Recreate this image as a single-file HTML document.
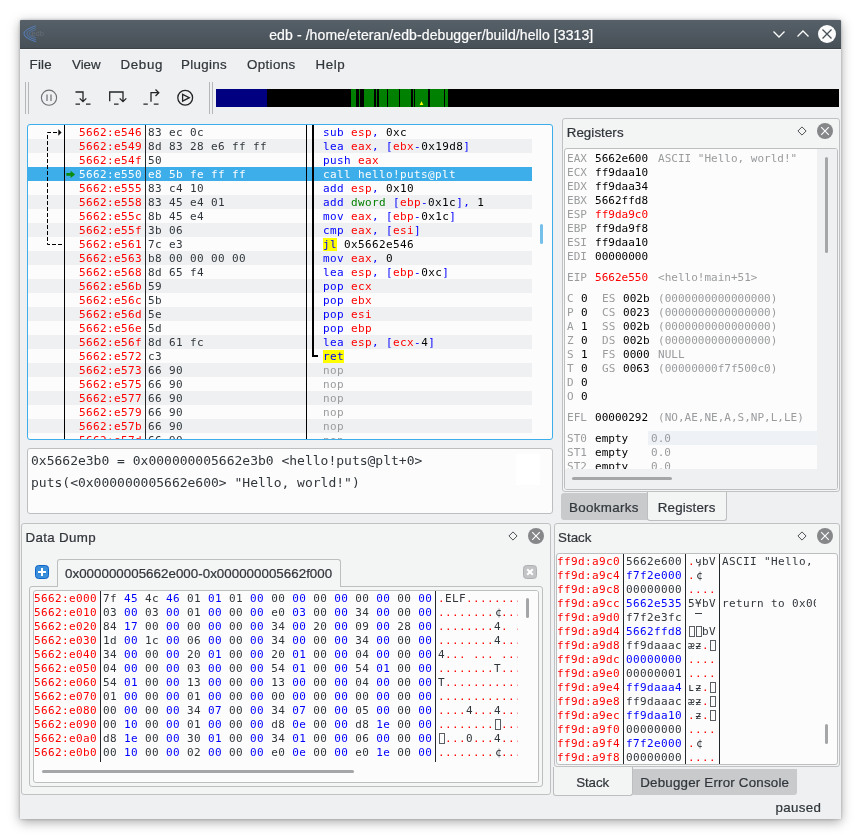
<!DOCTYPE html>
<html lang="en"><head><meta charset="utf-8"><title>edb - /home/eteran/edb-debugger/build/hello [3313]</title>
<style>
html,body{margin:0;padding:0}
body{width:861px;height:839px;background:#fff;position:relative;overflow:hidden;font-family:"Liberation Sans","DejaVu Sans",sans-serif;font-size:13.33px;color:#31363b}
*{box-sizing:border-box}
.abs{position:absolute}
.mono{font-family:"DejaVu Sans Mono","Liberation Mono",monospace;font-size:11px;letter-spacing:.3775px;white-space:pre;line-height:14px;color:#31363b}
.row{position:absolute;left:0;right:0;height:14px;line-height:14px;white-space:pre}
.r{color:#ff0000}.b{color:#0000ff}.g{color:#008000}.k{color:#000}.n{color:#999b9d}.d{color:#31363b}
.hl{background:#ffff00}
.c{color:#2a2e32;position:relative;left:1px}
.ui{position:absolute;white-space:nowrap;line-height:16px;-webkit-text-stroke-width:.22px}
.frame{position:absolute;border:1px solid #bcbec0;border-radius:3px;background:#fcfcfc}
.dock{position:absolute;border:1px solid #bfc1c3;border-radius:3px;background:#f3f4f4}
.vline{position:absolute;width:1px;background:#000}
.mc{display:inline-block;width:7px;height:1px;background:#3a3f44;vertical-align:7px}
.bx{display:inline-block;width:6px;height:11px;border:1px solid #5a5e62;margin:0 .5px;vertical-align:-2px;box-sizing:border-box}
</style></head>
<body>
<div id="root" style="position:absolute;left:0;top:0;width:861px;height:839px;will-change:transform">
<div class="abs" id="win" style="left:20px;top:20px;width:821px;height:799px;background:#eff0f1;box-shadow:0 3px 12px rgba(0,0,0,.35),0 0 3px rgba(0,0,0,.25);border-radius:1px 1px 0 0"></div>
<div class="abs" id="titlebar" style="left:20px;top:20px;width:821px;height:29px;background:linear-gradient(#566068,#475057);border-bottom:1px solid #3c444a;border-radius:1px 1px 0 0"></div><div class="abs" style="left:20px;top:49px;width:821px;height:1px;background:#f8f8f9"></div>
<div class="ui" id="title" style="left:20.8px;width:821px;top:26px;text-align:center;color:#fcfcfc;font-size:14px;line-height:18px;letter-spacing:.1px">edb - /home/eteran/edb-debugger/build/hello [3313]</div>
<svg class="abs" style="left:22px;top:24px" width="26" height="20" viewBox="0 0 26 20"><g fill="none" stroke="#5682c4" stroke-width="1.2" stroke-linecap="round"><path d="M13.5 1.8 Q-9.5 9.7 13.5 17.6" opacity=".75"/><path d="M13.5 3.8 Q-3.5 9.7 13.5 15.6" opacity=".6"/><path d="M13.5 5.8 Q1.5 9.7 13.5 13.6" opacity=".45"/></g><text x="9.4" y="12.2" font-family="Liberation Sans,sans-serif" font-size="7.5" fill="#656e76">edb</text></svg>
<svg class="abs" style="left:765px;top:22px" width="76" height="24" viewBox="0 0 76 24"><g fill="none" stroke="#fcfcfc" stroke-width="1.3"><path d="M8.5 9.5 L14 15 L19.5 9.5"/><path d="M32.5 14.5 L38 9 L43.5 14.5"/></g><circle cx="62" cy="12" r="9" fill="#fcfcfc"/><path d="M57.5 7.5 L66.5 16.5 M66.5 7.5 L57.5 16.5" stroke="#475057" stroke-width="1.3" fill="none"/></svg>
<div class="ui" style="left:29.5px;top:57px;letter-spacing:0.25px">File</div><div class="ui" style="left:72px;top:57px">View</div><div class="ui" style="left:120.5px;top:57px;letter-spacing:0.65px">Debug</div><div class="ui" style="left:181px;top:57px;letter-spacing:0.33px">Plugins</div><div class="ui" style="left:247px;top:57px;letter-spacing:0.37px">Options</div><div class="ui" style="left:315.5px;top:57px;letter-spacing:0.55px">Help</div>
<div class="abs" style="left:25px;top:82px;width:1px;height:32px;background:#b4b6b8"></div><div class="abs" style="left:28px;top:82px;width:1px;height:32px;background:#b4b6b8"></div><div class="abs" style="left:209px;top:82px;width:1px;height:32px;background:#b4b6b8"></div><div class="abs" style="left:212px;top:82px;width:1px;height:32px;background:#b4b6b8"></div>
<svg class="abs" style="left:36px;top:82px" width="164" height="32" viewBox="36 82 164 32" fill="none">
<circle cx="49" cy="97.7" r="7.6" stroke="#6c6f73" stroke-width="1.1"/>
<path d="M47 94.5V101M51 94.5V101" stroke="#6c6f73" stroke-width="1.2"/>
<g stroke="#232629" stroke-width="1.3">
<path d="M75.5 92H83V101.5M79.7 98.4L83 101.7L86.3 98.4M75.5 104.2H80M86 104.2H90.5"/>
<path d="M109.7 101.2V92H123V101.5M119.7 98.4L123 101.7L126.3 98.4M114 104.2H118.6"/>
<path d="M151 101.7V92.7H158.5M155.5 89.5L158.8 92.7L155.5 96M143.4 104.2H147.8M153.8 104.2H158.5"/>
<circle cx="185.2" cy="97.7" r="7.4"/>
<path d="M182.6 94.3V101.1L189.3 97.7Z" stroke-linejoin="miter"/>
</g></svg>
<div class="abs" id="regionbar" style="left:216px;top:89px;width:623px;height:18px;background:#000"></div>
<div class="abs" style="left:216px;top:89px;width:51px;height:18px;background:#000080"></div>
<div class="abs" style="left:351px;top:89px;width:5px;height:18px;background:#008000"></div><div class="abs" style="left:359px;top:89px;width:1px;height:18px;background:#008000"></div><div class="abs" style="left:364px;top:89px;width:10px;height:18px;background:#008000"></div><div class="abs" style="left:376px;top:89px;width:1px;height:18px;background:#008000"></div><div class="abs" style="left:379px;top:89px;width:8px;height:18px;background:#008000"></div><div class="abs" style="left:388px;top:89px;width:11px;height:18px;background:#008000"></div><div class="abs" style="left:400px;top:89px;width:11px;height:18px;background:#008000"></div><div class="abs" style="left:413px;top:89px;width:1px;height:18px;background:#008000"></div><div class="abs" style="left:415px;top:89px;width:13px;height:18px;background:#008000"></div><div class="abs" style="left:430px;top:89px;width:14px;height:18px;background:#008000"></div><div class="abs" style="left:445px;top:89px;width:3px;height:18px;background:#008000"></div>
<svg class="abs" style="left:419px;top:100px" width="6" height="6" viewBox="0 0 6 6"><path d="M0.6 5 L2.5 1.2 L4.4 5Z" fill="#ffff00"/></svg>
<div class="abs" id="disasm" style="left:27px;top:124px;width:526px;height:316px;border:1px solid #3daee9;border-radius:3px;background:#fcfcfc;overflow:hidden">
<div class="abs mono" style="left:51px;top:1px;color:#ff0000">5662:e546</div><div class="abs mono" style="left:120px;top:1px;color:#31363b">83 ec 0c</div><div class="abs mono" style="left:295px;top:1px;"><span class="b">sub</span> <span class="r">esp</span><span class="b">,</span> <span class="k">0xc</span></div>
<div class="abs" style="left:0;top:14px;width:504px;height:14px;background:#eff0f1"></div><div class="abs mono" style="left:51px;top:15px;color:#ff0000">5662:e549</div><div class="abs mono" style="left:120px;top:15px;color:#31363b">8d 83 28 e6 ff ff</div><div class="abs mono" style="left:295px;top:15px;"><span class="b">lea</span> <span class="r">eax</span><span class="b">,</span> <span class="b">[</span><span class="r">ebx</span><span class="b">-</span><span class="k">0x19d8</span><span class="b">]</span></div>
<div class="abs mono" style="left:51px;top:29px;color:#ff0000">5662:e54f</div><div class="abs mono" style="left:120px;top:29px;color:#31363b">50</div><div class="abs mono" style="left:295px;top:29px;"><span class="b">push</span> <span class="r">eax</span></div>
<div class="abs" style="left:0;top:42px;width:504px;height:14px;background:#3daee9"></div><div class="abs mono" style="left:51px;top:43px;color:#fcfcfc">5662:e550</div><div class="abs mono" style="left:120px;top:43px;color:#fcfcfc">e8 5b fe ff ff</div><div class="abs mono" style="left:295px;top:43px;color:#fcfcfc">call hello!puts@plt</div>
<div class="abs mono" style="left:51px;top:57px;color:#ff0000">5662:e555</div><div class="abs mono" style="left:120px;top:57px;color:#31363b">83 c4 10</div><div class="abs mono" style="left:295px;top:57px;"><span class="b">add</span> <span class="r">esp</span><span class="b">,</span> <span class="k">0x10</span></div>
<div class="abs" style="left:0;top:70px;width:504px;height:14px;background:#eff0f1"></div><div class="abs mono" style="left:51px;top:71px;color:#ff0000">5662:e558</div><div class="abs mono" style="left:120px;top:71px;color:#31363b">83 45 e4 01</div><div class="abs mono" style="left:295px;top:71px;"><span class="b">add</span> <span class="g">dword</span> <span class="b">[</span><span class="r">ebp</span><span class="b">-</span><span class="k">0x1c</span><span class="b">],</span> <span class="k">1</span></div>
<div class="abs mono" style="left:51px;top:85px;color:#ff0000">5662:e55c</div><div class="abs mono" style="left:120px;top:85px;color:#31363b">8b 45 e4</div><div class="abs mono" style="left:295px;top:85px;"><span class="b">mov</span> <span class="r">eax</span><span class="b">,</span> <span class="b">[</span><span class="r">ebp</span><span class="b">-</span><span class="k">0x1c</span><span class="b">]</span></div>
<div class="abs" style="left:0;top:98px;width:504px;height:14px;background:#eff0f1"></div><div class="abs mono" style="left:51px;top:99px;color:#ff0000">5662:e55f</div><div class="abs mono" style="left:120px;top:99px;color:#31363b">3b 06</div><div class="abs mono" style="left:295px;top:99px;"><span class="b">cmp</span> <span class="r">eax</span><span class="b">,</span> <span class="b">[</span><span class="r">esi</span><span class="b">]</span></div>
<div class="abs mono" style="left:51px;top:113px;color:#ff0000">5662:e561</div><div class="abs mono" style="left:120px;top:113px;color:#31363b">7c e3</div><div class="abs mono" style="left:295px;top:113px;"><span class="b hl">jl</span> <span class="k">0x5662e546</span></div>
<div class="abs" style="left:0;top:126px;width:504px;height:14px;background:#eff0f1"></div><div class="abs mono" style="left:51px;top:127px;color:#ff0000">5662:e563</div><div class="abs mono" style="left:120px;top:127px;color:#31363b">b8 00 00 00 00</div><div class="abs mono" style="left:295px;top:127px;"><span class="b">mov</span> <span class="r">eax</span><span class="b">,</span> <span class="k">0</span></div>
<div class="abs mono" style="left:51px;top:141px;color:#ff0000">5662:e568</div><div class="abs mono" style="left:120px;top:141px;color:#31363b">8d 65 f4</div><div class="abs mono" style="left:295px;top:141px;"><span class="b">lea</span> <span class="r">esp</span><span class="b">,</span> <span class="b">[</span><span class="r">ebp</span><span class="b">-</span><span class="k">0xc</span><span class="b">]</span></div>
<div class="abs" style="left:0;top:154px;width:504px;height:14px;background:#eff0f1"></div><div class="abs mono" style="left:51px;top:155px;color:#ff0000">5662:e56b</div><div class="abs mono" style="left:120px;top:155px;color:#31363b">59</div><div class="abs mono" style="left:295px;top:155px;"><span class="b">pop</span> <span class="r">ecx</span></div>
<div class="abs mono" style="left:51px;top:169px;color:#ff0000">5662:e56c</div><div class="abs mono" style="left:120px;top:169px;color:#31363b">5b</div><div class="abs mono" style="left:295px;top:169px;"><span class="b">pop</span> <span class="r">ebx</span></div>
<div class="abs" style="left:0;top:182px;width:504px;height:14px;background:#eff0f1"></div><div class="abs mono" style="left:51px;top:183px;color:#ff0000">5662:e56d</div><div class="abs mono" style="left:120px;top:183px;color:#31363b">5e</div><div class="abs mono" style="left:295px;top:183px;"><span class="b">pop</span> <span class="r">esi</span></div>
<div class="abs mono" style="left:51px;top:197px;color:#ff0000">5662:e56e</div><div class="abs mono" style="left:120px;top:197px;color:#31363b">5d</div><div class="abs mono" style="left:295px;top:197px;"><span class="b">pop</span> <span class="r">ebp</span></div>
<div class="abs" style="left:0;top:210px;width:504px;height:14px;background:#eff0f1"></div><div class="abs mono" style="left:51px;top:211px;color:#ff0000">5662:e56f</div><div class="abs mono" style="left:120px;top:211px;color:#31363b">8d 61 fc</div><div class="abs mono" style="left:295px;top:211px;"><span class="b">lea</span> <span class="r">esp</span><span class="b">,</span> <span class="b">[</span><span class="r">ecx</span><span class="b">-</span><span class="k">4</span><span class="b">]</span></div>
<div class="abs mono" style="left:51px;top:225px;color:#ff0000">5662:e572</div><div class="abs mono" style="left:120px;top:225px;color:#31363b">c3</div><div class="abs mono" style="left:295px;top:225px;"><span class="b hl">ret</span></div>
<div class="abs" style="left:0;top:238px;width:504px;height:14px;background:#eff0f1"></div><div class="abs mono" style="left:51px;top:239px;color:#ff0000">5662:e573</div><div class="abs mono" style="left:120px;top:239px;color:#31363b">66 90</div><div class="abs mono" style="left:295px;top:239px;"><span class="n">nop</span></div>
<div class="abs mono" style="left:51px;top:253px;color:#ff0000">5662:e575</div><div class="abs mono" style="left:120px;top:253px;color:#31363b">66 90</div><div class="abs mono" style="left:295px;top:253px;"><span class="n">nop</span></div>
<div class="abs" style="left:0;top:266px;width:504px;height:14px;background:#eff0f1"></div><div class="abs mono" style="left:51px;top:267px;color:#ff0000">5662:e577</div><div class="abs mono" style="left:120px;top:267px;color:#31363b">66 90</div><div class="abs mono" style="left:295px;top:267px;"><span class="n">nop</span></div>
<div class="abs mono" style="left:51px;top:281px;color:#ff0000">5662:e579</div><div class="abs mono" style="left:120px;top:281px;color:#31363b">66 90</div><div class="abs mono" style="left:295px;top:281px;"><span class="n">nop</span></div>
<div class="abs" style="left:0;top:294px;width:504px;height:14px;background:#eff0f1"></div><div class="abs mono" style="left:51px;top:295px;color:#ff0000">5662:e57b</div><div class="abs mono" style="left:120px;top:295px;color:#31363b">66 90</div><div class="abs mono" style="left:295px;top:295px;"><span class="n">nop</span></div>
<div class="abs mono" style="left:51px;top:309px;color:#ff0000">5662:e57d</div><div class="abs mono" style="left:120px;top:309px;color:#31363b">66 90</div><div class="abs mono" style="left:295px;top:309px;"><span class="n">nop</span></div>
<div class="vline" style="left:36px;top:0;height:315px"></div><div class="vline" style="left:117px;top:0;height:315px;background:#232629"></div><div class="vline" style="left:278px;top:0;height:315px"></div><div class="abs" style="left:284px;top:0;width:2px;height:232px;background:#000"></div><div class="abs" style="left:284px;top:230px;width:6px;height:2px;background:#000"></div>
<svg class="abs" style="left:0;top:0" width="36" height="130" viewBox="0 0 36 130" fill="none"><path d="M34 119.5H19.5V7.5H30" stroke="#000" stroke-width="1" stroke-dasharray="4 2"/><path d="M30.3 4.3L33.6 7.5L30.3 10.7Z" fill="#111"/></svg>
<svg class="abs" style="left:38px;top:44px" width="11" height="10" viewBox="0 0 11 10"><path d="M0.3 4H4.6V1.8L9.1 5.4L4.6 9V6.8H0.3Z" fill="#0c8c0c"/></svg>
<div class="abs" style="left:512px;top:99px;width:3px;height:20px;background:#74c0ea;border-radius:2px"></div>
</div>
<div class="frame" id="info" style="left:27px;top:448px;width:526px;height:66px;background:#fcfcfc"></div>
<div class="abs mono" style="left:31px;top:454px;font-size:13px;letter-spacing:0;line-height:14px">0x5662e3b0 = 0x000000005662e3b0 &lt;hello!puts@plt+0&gt;</div>
<div class="abs mono" style="left:31px;top:476px;font-size:13px;letter-spacing:0;line-height:14px">puts(&lt;0x000000005662e600&gt; "Hello, world!")</div>
<div class="abs" style="left:516px;top:454px;width:24px;height:31px;background:#fff"></div>
<div class="dock" id="regdock" style="left:562px;top:118px;width:278px;height:374px"></div>
<div class="ui" style="left:566.7px;top:125px;letter-spacing:0.07px">Registers</div>
<svg class="abs" style="left:796px;top:125px" width="12" height="12" viewBox="0 0 12 12"><path d="M6 1.9L10.1 6L6 10.1L1.9 6Z" fill="none" stroke="#4d5155" stroke-width="1"/></svg><svg class="abs" style="left:816px;top:122px" width="18" height="18" viewBox="0 0 18 18"><circle cx="9" cy="9" r="8" fill="#858789"/><path d="M5.2 5.2L12.8 12.8M12.8 5.2L5.2 12.8" stroke="#fcfcfc" stroke-width="1.2"/></svg>
<div class="frame" id="regview" style="left:564px;top:148px;width:274px;height:342px;overflow:hidden">
<div class="abs" style="left:252px;top:0;width:20px;height:340px;background:#eff0f1"></div><div class="abs" style="left:0;top:320px;width:272px;height:20px;background:#eff0f1"></div><div class="abs" style="left:260px;top:8px;width:3px;height:96px;background:#a4a6a8;border-radius:2px"></div><div class="abs" style="left:7px;top:328px;width:100px;height:3px;background:#a4a6a8;border-radius:2px"></div><div class="abs" style="left:83px;top:282px;width:169px;height:14px;background:#eef2f7"></div>
<div class="abs" style="left:0;top:0;width:252px;height:320px;overflow:hidden">
<div class="abs mono n" style="left:2.1px;top:3px;letter-spacing:0">EAX</div><div class="abs mono k" style="left:30.1px;top:3px;letter-spacing:0">5662e600</div><div class="abs mono n" style="left:93.1px;top:3px;letter-spacing:0">ASCII &quot;Hello, world!&quot;</div>
<div class="abs mono n" style="left:2.1px;top:17px;letter-spacing:0">ECX</div><div class="abs mono k" style="left:30.1px;top:17px;letter-spacing:0">ff9daa10</div>
<div class="abs mono n" style="left:2.1px;top:31px;letter-spacing:0">EDX</div><div class="abs mono k" style="left:30.1px;top:31px;letter-spacing:0">ff9daa34</div>
<div class="abs mono n" style="left:2.1px;top:45px;letter-spacing:0">EBX</div><div class="abs mono k" style="left:30.1px;top:45px;letter-spacing:0">5662ffd8</div>
<div class="abs mono n" style="left:2.1px;top:59px;letter-spacing:0">ESP</div><div class="abs mono r" style="left:30.1px;top:59px;letter-spacing:0">ff9da9c0</div>
<div class="abs mono n" style="left:2.1px;top:73px;letter-spacing:0">EBP</div><div class="abs mono k" style="left:30.1px;top:73px;letter-spacing:0">ff9da9f8</div>
<div class="abs mono n" style="left:2.1px;top:87px;letter-spacing:0">ESI</div><div class="abs mono k" style="left:30.1px;top:87px;letter-spacing:0">ff9daa10</div>
<div class="abs mono n" style="left:2.1px;top:101px;letter-spacing:0">EDI</div><div class="abs mono k" style="left:30.1px;top:101px;letter-spacing:0">00000000</div>
<div class="abs mono n" style="left:2.1px;top:122px;letter-spacing:0">EIP</div><div class="abs mono r" style="left:30.1px;top:122px;letter-spacing:0">5662e550</div><div class="abs mono n" style="left:93.1px;top:122px;letter-spacing:0">&lt;hello!main+51&gt;</div>
<div class="abs mono n" style="left:2.1px;top:143px;letter-spacing:0">C</div><div class="abs mono k" style="left:16.1px;top:143px;letter-spacing:0">0</div><div class="abs mono n" style="left:37.1px;top:143px;letter-spacing:0">ES</div><div class="abs mono k" style="left:58.1px;top:143px;letter-spacing:0">002b</div><div class="abs mono n" style="left:93.1px;top:143px;letter-spacing:0">(0000000000000000)</div>
<div class="abs mono n" style="left:2.1px;top:157px;letter-spacing:0">P</div><div class="abs mono k" style="left:16.1px;top:157px;letter-spacing:0">0</div><div class="abs mono n" style="left:37.1px;top:157px;letter-spacing:0">CS</div><div class="abs mono k" style="left:58.1px;top:157px;letter-spacing:0">0023</div><div class="abs mono n" style="left:93.1px;top:157px;letter-spacing:0">(0000000000000000)</div>
<div class="abs mono n" style="left:2.1px;top:171px;letter-spacing:0">A</div><div class="abs mono k" style="left:16.1px;top:171px;letter-spacing:0">1</div><div class="abs mono n" style="left:37.1px;top:171px;letter-spacing:0">SS</div><div class="abs mono k" style="left:58.1px;top:171px;letter-spacing:0">002b</div><div class="abs mono n" style="left:93.1px;top:171px;letter-spacing:0">(0000000000000000)</div>
<div class="abs mono n" style="left:2.1px;top:185px;letter-spacing:0">Z</div><div class="abs mono k" style="left:16.1px;top:185px;letter-spacing:0">0</div><div class="abs mono n" style="left:37.1px;top:185px;letter-spacing:0">DS</div><div class="abs mono k" style="left:58.1px;top:185px;letter-spacing:0">002b</div><div class="abs mono n" style="left:93.1px;top:185px;letter-spacing:0">(0000000000000000)</div>
<div class="abs mono n" style="left:2.1px;top:199px;letter-spacing:0">S</div><div class="abs mono k" style="left:16.1px;top:199px;letter-spacing:0">1</div><div class="abs mono n" style="left:37.1px;top:199px;letter-spacing:0">FS</div><div class="abs mono k" style="left:58.1px;top:199px;letter-spacing:0">0000</div><div class="abs mono n" style="left:93.1px;top:199px;letter-spacing:0">NULL</div>
<div class="abs mono n" style="left:2.1px;top:213px;letter-spacing:0">T</div><div class="abs mono k" style="left:16.1px;top:213px;letter-spacing:0">0</div><div class="abs mono n" style="left:37.1px;top:213px;letter-spacing:0">GS</div><div class="abs mono k" style="left:58.1px;top:213px;letter-spacing:0">0063</div><div class="abs mono n" style="left:93.1px;top:213px;letter-spacing:0">(00000000f7f500c0)</div>
<div class="abs mono n" style="left:2.1px;top:227px;letter-spacing:0">D</div><div class="abs mono k" style="left:16.1px;top:227px;letter-spacing:0">0</div>
<div class="abs mono n" style="left:2.1px;top:241px;letter-spacing:0">O</div><div class="abs mono k" style="left:16.1px;top:241px;letter-spacing:0">0</div>
<div class="abs mono n" style="left:2.1px;top:262px;letter-spacing:0">EFL</div><div class="abs mono k" style="left:30.1px;top:262px;letter-spacing:0">00000292</div><div class="abs mono n" style="left:93.1px;top:262px;letter-spacing:0">(NO,AE,NE,A,S,NP,L,LE)</div>
<div class="abs mono n" style="left:2.1px;top:283px;letter-spacing:0">ST0</div><div class="abs mono k" style="left:30.1px;top:283px;letter-spacing:0">empty</div><div class="abs mono n" style="left:86.1px;top:283px;letter-spacing:0">0.0</div>
<div class="abs mono n" style="left:2.1px;top:297px;letter-spacing:0">ST1</div><div class="abs mono k" style="left:30.1px;top:297px;letter-spacing:0">empty</div><div class="abs mono n" style="left:86.1px;top:297px;letter-spacing:0">0.0</div>
<div class="abs mono n" style="left:2.1px;top:311px;letter-spacing:0">ST2</div><div class="abs mono k" style="left:30.1px;top:311px;letter-spacing:0">empty</div><div class="abs mono n" style="left:86.1px;top:311px;letter-spacing:0">0.0</div>
</div></div>
<div class="abs" style="left:561px;top:493px;width:87px;height:27px;background:#c8cacc;border-radius:3px 0 0 3px"></div><div class="abs" style="left:647px;top:492px;width:80px;height:29px;background:#f3f4f4;border:1px solid #bcbec0;border-top:none;border-radius:0 0 3px 3px"></div><div class="ui" style="left:569px;top:500px;letter-spacing:0.35px">Bookmarks</div><div class="ui" style="left:657.8px;top:500px;letter-spacing:0.15px">Registers</div>
<div class="dock" id="dumpdock" style="left:21px;top:523px;width:530px;height:272px"></div>
<div class="ui" style="left:25.5px;top:530px;letter-spacing:0.33px">Data Dump</div>
<svg class="abs" style="left:507px;top:530px" width="12" height="12" viewBox="0 0 12 12"><path d="M6 1.9L10.1 6L6 10.1L1.9 6Z" fill="none" stroke="#4d5155" stroke-width="1"/></svg><svg class="abs" style="left:527px;top:527px" width="18" height="18" viewBox="0 0 18 18"><circle cx="9" cy="9" r="8" fill="#858789"/><path d="M5.2 5.2L12.8 12.8M12.8 5.2L5.2 12.8" stroke="#fcfcfc" stroke-width="1.2"/></svg>
<div class="abs" style="left:29px;top:586px;width:514px;height:201px;border:1px solid #bcbec0;border-radius:3px;background:#f4f5f5"></div>
<div class="abs" style="left:57px;top:559px;width:284px;height:28px;border:1px solid #bcbec0;border-bottom:none;border-radius:3px 3px 0 0;background:#f4f5f5"></div>
<div class="ui" style="left:65px;top:566px;letter-spacing:0.03px">0x000000005662e000-0x000000005662f000</div>
<svg class="abs" style="left:35px;top:565px" width="14" height="14" viewBox="0 0 14 14"><rect x=".5" y=".5" width="13" height="13" rx="3" fill="#3b8eda" stroke="#0c63c9"/><path d="M7 4.3V11M3.3 7.6H10.7" stroke="#0a4fb4" stroke-width="2" opacity=".55"/><path d="M7 3V11M3 7H11" stroke="#fff" stroke-width="2"/></svg>
<svg class="abs" style="left:523px;top:565px" width="14" height="14" viewBox="0 0 14 14"><rect x=".5" y=".5" width="13" height="13" rx="3" fill="#c3c4c6" stroke="#aeb0b2"/><path d="M4.2 4.2L9.8 9.8M9.8 4.2L4.2 9.8" stroke="#fff" stroke-width="2"/></svg>
<div class="frame" id="hexview" style="left:33px;top:590px;width:506px;height:193px;overflow:hidden">
<div class="abs" style="left:485px;top:0;width:19px;height:191px;background:#fcfcfc"></div><div class="abs mono r" style="left:0px;top:1px">5662:e000</div><div class="abs mono" style="left:69px;top:1px">7f <span class="b">45</span> 4c <span class="b">46</span> 01 <span class="b">01</span> 01 <span class="b">00</span> 00 <span class="b">00</span> 00 <span class="b">00</span> 00 <span class="b">00</span> 00 <span class="b">00</span></div><div class="abs mono" style="left:404px;top:1px;width:80px;overflow:hidden"><span class="r">.</span><span class="d">ELF</span><span class="r">............</span></div>
<div class="abs mono r" style="left:0px;top:15px">5662:e010</div><div class="abs mono" style="left:69px;top:15px">03 <span class="b">00</span> 03 <span class="b">00</span> 01 <span class="b">00</span> 00 <span class="b">00</span> e0 <span class="b">03</span> 00 <span class="b">00</span> 34 <span class="b">00</span> 00 <span class="b">00</span></div><div class="abs mono" style="left:404px;top:15px;width:80px;overflow:hidden"><span class="r">........</span><span class="c">¢</span><span class="r">...</span><span class="d">4</span><span class="r">...</span></div>
<div class="abs mono r" style="left:0px;top:29px">5662:e020</div><div class="abs mono" style="left:69px;top:29px">84 <span class="b">17</span> 00 <span class="b">00</span> 00 <span class="b">00</span> 00 <span class="b">00</span> 34 <span class="b">00</span> 20 <span class="b">00</span> 09 <span class="b">00</span> 28 <span class="b">00</span></div><div class="abs mono" style="left:404px;top:29px;width:80px;overflow:hidden"><span class="r">........</span><span class="d">4</span><span class="r">.</span><span class="d"> </span><span class="r">...</span><span class="d">(</span><span class="r">.</span></div>
<div class="abs mono r" style="left:0px;top:43px">5662:e030</div><div class="abs mono" style="left:69px;top:43px">1d <span class="b">00</span> 1c <span class="b">00</span> 06 <span class="b">00</span> 00 <span class="b">00</span> 34 <span class="b">00</span> 00 <span class="b">00</span> 34 <span class="b">00</span> 00 <span class="b">00</span></div><div class="abs mono" style="left:404px;top:43px;width:80px;overflow:hidden"><span class="r">........</span><span class="d">4</span><span class="r">...</span><span class="d">4</span><span class="r">...</span></div>
<div class="abs mono r" style="left:0px;top:57px">5662:e040</div><div class="abs mono" style="left:69px;top:57px">34 <span class="b">00</span> 00 <span class="b">00</span> 20 <span class="b">01</span> 00 <span class="b">00</span> 20 <span class="b">01</span> 00 <span class="b">00</span> 04 <span class="b">00</span> 00 <span class="b">00</span></div><div class="abs mono" style="left:404px;top:57px;width:80px;overflow:hidden"><span class="d">4</span><span class="r">...</span><span class="d"> </span><span class="r">...</span><span class="d"> </span><span class="r">.......</span></div>
<div class="abs mono r" style="left:0px;top:71px">5662:e050</div><div class="abs mono" style="left:69px;top:71px">04 <span class="b">00</span> 00 <span class="b">00</span> 03 <span class="b">00</span> 00 <span class="b">00</span> 54 <span class="b">01</span> 00 <span class="b">00</span> 54 <span class="b">01</span> 00 <span class="b">00</span></div><div class="abs mono" style="left:404px;top:71px;width:80px;overflow:hidden"><span class="r">........</span><span class="d">T</span><span class="r">...</span><span class="d">T</span><span class="r">...</span></div>
<div class="abs mono r" style="left:0px;top:85px">5662:e060</div><div class="abs mono" style="left:69px;top:85px">54 <span class="b">01</span> 00 <span class="b">00</span> 13 <span class="b">00</span> 00 <span class="b">00</span> 13 <span class="b">00</span> 00 <span class="b">00</span> 04 <span class="b">00</span> 00 <span class="b">00</span></div><div class="abs mono" style="left:404px;top:85px;width:80px;overflow:hidden"><span class="d">T</span><span class="r">...............</span></div>
<div class="abs mono r" style="left:0px;top:99px">5662:e070</div><div class="abs mono" style="left:69px;top:99px">01 <span class="b">00</span> 00 <span class="b">00</span> 01 <span class="b">00</span> 00 <span class="b">00</span> 00 <span class="b">00</span> 00 <span class="b">00</span> 00 <span class="b">00</span> 00 <span class="b">00</span></div><div class="abs mono" style="left:404px;top:99px;width:80px;overflow:hidden"><span class="r">................</span></div>
<div class="abs mono r" style="left:0px;top:113px">5662:e080</div><div class="abs mono" style="left:69px;top:113px">00 <span class="b">00</span> 00 <span class="b">00</span> 34 <span class="b">07</span> 00 <span class="b">00</span> 34 <span class="b">07</span> 00 <span class="b">00</span> 05 <span class="b">00</span> 00 <span class="b">00</span></div><div class="abs mono" style="left:404px;top:113px;width:80px;overflow:hidden"><span class="r">....</span><span class="d">4</span><span class="r">...</span><span class="d">4</span><span class="r">.......</span></div>
<div class="abs mono r" style="left:0px;top:127px">5662:e090</div><div class="abs mono" style="left:69px;top:127px">00 <span class="b">10</span> 00 <span class="b">00</span> 01 <span class="b">00</span> 00 <span class="b">00</span> d8 <span class="b">0e</span> 00 <span class="b">00</span> d8 <span class="b">1e</span> 00 <span class="b">00</span></div><div class="abs mono" style="left:404px;top:127px;width:80px;overflow:hidden"><span class="r">........</span><span class="bx"></span><span class="r">...</span><span class="bx"></span><span class="r">...</span></div>
<div class="abs mono r" style="left:0px;top:141px">5662:e0a0</div><div class="abs mono" style="left:69px;top:141px">d8 <span class="b">1e</span> 00 <span class="b">00</span> 30 <span class="b">01</span> 00 <span class="b">00</span> 34 <span class="b">01</span> 00 <span class="b">00</span> 06 <span class="b">00</span> 00 <span class="b">00</span></div><div class="abs mono" style="left:404px;top:141px;width:80px;overflow:hidden"><span class="bx"></span><span class="r">...</span><span class="d">0</span><span class="r">...</span><span class="d">4</span><span class="r">.......</span></div>
<div class="abs mono r" style="left:0px;top:155px">5662:e0b0</div><div class="abs mono" style="left:69px;top:155px">00 <span class="b">10</span> 00 <span class="b">00</span> 02 <span class="b">00</span> 00 <span class="b">00</span> e0 <span class="b">0e</span> 00 <span class="b">00</span> e0 <span class="b">1e</span> 00 <span class="b">00</span></div><div class="abs mono" style="left:404px;top:155px;width:80px;overflow:hidden"><span class="r">........</span><span class="c">¢</span><span class="r">...</span><span class="c">¢</span><span class="r">...</span></div>
<div class="vline" style="left:66px;top:0;height:171px;background:#232629"></div><div class="vline" style="left:401px;top:0;height:171px;background:#232629"></div><div class="abs" style="left:492px;top:7px;width:3px;height:20px;background:#a4a6a8;border-radius:2px"></div><div class="abs" style="left:8px;top:179px;width:312px;height:3px;background:#a4a6a8;border-radius:2px"></div>
</div>
<div class="dock" id="stackdock" style="left:554px;top:523px;width:286px;height:244px"></div>
<div class="ui" style="left:558.1px;top:530px">Stack</div>
<svg class="abs" style="left:796px;top:530px" width="12" height="12" viewBox="0 0 12 12"><path d="M6 1.9L10.1 6L6 10.1L1.9 6Z" fill="none" stroke="#4d5155" stroke-width="1"/></svg><svg class="abs" style="left:816px;top:527px" width="18" height="18" viewBox="0 0 18 18"><circle cx="9" cy="9" r="8" fill="#858789"/><path d="M5.2 5.2L12.8 12.8M12.8 5.2L5.2 12.8" stroke="#fcfcfc" stroke-width="1.2"/></svg>
<div class="frame" id="stackview" style="left:556px;top:553px;width:282px;height:212px;overflow:hidden">
<div class="abs mono r" style="left:0px;top:0.5px">ff9d:a9c0</div><div class="abs mono d" style="left:69px;top:0.5px">5662e600</div><div class="abs mono" style="left:131px;top:0.5px"><span class="r">.</span><span class="d">ӌbV</span></div><div class="abs mono" style="left:165px;top:0.5px;width:94px;overflow:hidden">ASCII &quot;Hello, </div>
<div class="abs mono r" style="left:0px;top:14.5px">ff9d:a9c4</div><div class="abs mono b" style="left:69px;top:14.5px">f7f2e000</div><div class="abs mono" style="left:131px;top:14.5px"><span class="r">.</span><span class="c">¢</span></div>
<div class="abs mono r" style="left:0px;top:28.5px">ff9d:a9c8</div><div class="abs mono d" style="left:69px;top:28.5px">00000000</div><div class="abs mono" style="left:131px;top:28.5px"><span class="r">....</span></div>
<div class="abs mono r" style="left:0px;top:42.5px">ff9d:a9cc</div><div class="abs mono b" style="left:69px;top:42.5px">5662e535</div><div class="abs mono" style="left:131px;top:42.5px"><span class="d">5¥bV</span></div><div class="abs mono" style="left:165px;top:42.5px;width:94px;overflow:hidden">return to 0x000</div>
<div class="abs mono r" style="left:0px;top:56.5px">ff9d:a9d0</div><div class="abs mono d" style="left:69px;top:56.5px">f7f2e3fc</div><div class="abs mono" style="left:131px;top:56.5px"><span class="d"> </span><span class="mc"></span></div>
<div class="abs mono r" style="left:0px;top:70.5px">ff9d:a9d4</div><div class="abs mono b" style="left:69px;top:70.5px">5662ffd8</div><div class="abs mono" style="left:131px;top:70.5px"><span class="bx"></span><span class="bx"></span><span class="d">bV</span></div>
<div class="abs mono r" style="left:0px;top:84.5px">ff9d:a9d8</div><div class="abs mono d" style="left:69px;top:84.5px">ff9daaac</div><div class="abs mono" style="left:131px;top:84.5px"><span class="d">ᴂƶ</span><span class="r">.</span><span class="bx"></span></div>
<div class="abs mono r" style="left:0px;top:98.5px">ff9d:a9dc</div><div class="abs mono b" style="left:69px;top:98.5px">00000000</div><div class="abs mono" style="left:131px;top:98.5px"><span class="r">....</span></div>
<div class="abs mono r" style="left:0px;top:112.5px">ff9d:a9e0</div><div class="abs mono d" style="left:69px;top:112.5px">00000001</div><div class="abs mono" style="left:131px;top:112.5px"><span class="r">....</span></div>
<div class="abs mono r" style="left:0px;top:126.5px">ff9d:a9e4</div><div class="abs mono b" style="left:69px;top:126.5px">ff9daaa4</div><div class="abs mono" style="left:131px;top:126.5px"><span class="d">ʟƶ</span><span class="r">.</span><span class="bx"></span></div>
<div class="abs mono r" style="left:0px;top:140.5px">ff9d:a9e8</div><div class="abs mono d" style="left:69px;top:140.5px">ff9daaac</div><div class="abs mono" style="left:131px;top:140.5px"><span class="d">ᴂƶ</span><span class="r">.</span><span class="bx"></span></div>
<div class="abs mono r" style="left:0px;top:154.5px">ff9d:a9ec</div><div class="abs mono b" style="left:69px;top:154.5px">ff9daa10</div><div class="abs mono" style="left:131px;top:154.5px"><span class="r">.</span><span class="d">ƶ</span><span class="r">.</span><span class="bx"></span></div>
<div class="abs mono r" style="left:0px;top:168.5px">ff9d:a9f0</div><div class="abs mono d" style="left:69px;top:168.5px">00000000</div><div class="abs mono" style="left:131px;top:168.5px"><span class="r">....</span></div>
<div class="abs mono r" style="left:0px;top:182.5px">ff9d:a9f4</div><div class="abs mono b" style="left:69px;top:182.5px">f7f2e000</div><div class="abs mono" style="left:131px;top:182.5px"><span class="r">.</span><span class="c">¢</span></div>
<div class="abs mono r" style="left:0px;top:196.5px">ff9d:a9f8</div><div class="abs mono d" style="left:69px;top:196.5px">00000000</div><div class="abs mono" style="left:131px;top:196.5px"><span class="r">....</span></div>
<div class="vline" style="left:66px;top:0;height:210px;background:#232629"></div><div class="vline" style="left:128px;top:0;height:210px;background:#232629"></div><div class="vline" style="left:162px;top:0;height:210px;background:#232629"></div><div class="abs" style="left:268px;top:170px;width:3px;height:20px;background:#a4a6a8;border-radius:2px"></div>
</div>
<div class="abs" style="left:553px;top:767px;width:80px;height:29px;background:#f3f4f4;border:1px solid #bcbec0;border-top:none;border-radius:0 0 3px 3px"></div><div class="abs" style="left:633px;top:769px;width:164px;height:26px;background:#c8cacc;border-radius:0 0 3px 0"></div><div class="ui" style="left:576.2px;top:775px;letter-spacing:-0.1px">Stack</div><div class="ui" style="left:640.3px;top:775px;letter-spacing:0.2px">Debugger Error Console</div>
<div class="ui" style="left:775.6px;top:800px;letter-spacing:0.3px">paused</div>
</div>
</body></html>
